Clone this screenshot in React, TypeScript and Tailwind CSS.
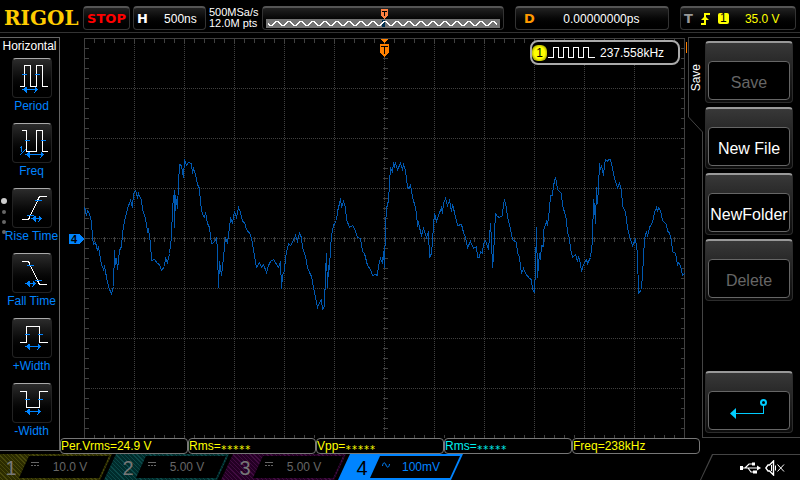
import type { ReactNode } from "react"

type IconProps = {
    lines: string,
    marks: string,
    arrow: number[],
    fraction?: boolean
}

type ChannelType = {
    id: number,
    scale: string,
    coupling: string,
    skin: string,
    active?: boolean
}

const TRACE = "84,207 86,215 87,210 89,213 91,222 92,236 93,244 95,242 97,250 98,246 101,264 103,269 104,266 107,282 109,289 111,293 113,286 114,250 115,264 116,258 117,269 119,250 121,246 122,233 124,221 127,208 130,200 132,207 133,193 135,190 137,197 138,193 141,200 142,209 145,218 147,231 148,229 150,243 151,260 154,259 157,263 159,264 161,270 164,266 165,258 167,262 169,253 171,237 172,207 174,190 174,227 175,195 177,208 178,183 179,164 181,165 183,177 184,159 186,165 188,162 191,163 192,173 193,168 195,174 197,184 199,188 200,202 202,214 204,217 205,212 207,223 209,227 211,243 214,242 216,237 217,250 218,287 219,261 221,275 223,257 225,237 227,243 229,227 230,218 232,222 234,211 236,217 238,207 240,212 242,221 244,222 246,229 250,234 252,243 254,255 256,267 259,262 261,267 263,264 266,272 268,265 270,261 273,259 278,267 280,261 281,288 282,275 284,270 285,257 288,243 290,245 292,242 295,235 297,241 299,233 301,237 302,247 305,256 307,267 309,272 311,276 313,287 315,297 317,307 319,302 321,299 322,309 324,306 325,273 326,253 327,287 328,266 329,268 330,248 331,235 333,225 336,220 337,211 339,203 340,198 341,207 343,201 345,207 346,219 349,227 352,225 354,228 357,237 360,238 362,251 364,253 367,265 370,269 372,275 375,274 377,275 378,265 380,258 382,263 383,251 384,267 385,226 386,208 388,200 389,183 390,167 392,172 393,162 394,166 395,163 397,169 400,163 402,169 403,164 405,170 407,187 409,188 410,184 412,197 415,207 416,213 417,226 418,221 419,227 421,235 423,228 426,237 428,231 429,257 431,253 432,240 433,225 434,213 436,221 438,215 441,207 442,213 443,203 445,198 447,205 449,200 451,211 452,204 454,212 457,225 461,224 463,232 465,237 467,247 470,241 473,248 476,246 477,257 479,257 480,251 482,253 483,243 485,240 488,249 490,223 491,240 492,267 493,257 494,233 495,213 497,216 499,217 502,215 503,203 504,200 506,207 507,217 509,224 512,239 516,242 517,252 519,257 521,273 523,268 525,273 529,278 531,279 532,289 534,292 535,267 536,227 537,277 539,253 540,259 541,245 543,246 543,230 546,221 547,225 549,208 550,195 552,195 553,185 555,177 556,182 557,189 561,193 562,205 565,215 566,220 567,232 569,238 570,248 572,257 575,254 577,261 578,256 580,263 581,271 583,264 586,259 587,263 590,257 592,240 593,199 594,205 595,223 596,187 597,203 598,187 599,163 600,169 601,165 603,175 604,165 605,159 607,161 608,159 610,159 612,168 614,178 617,187 619,183 621,190 622,205 625,212 627,227 629,236 632,245 635,239 637,253 638,293 641,289 642,273 643,258 644,238 646,231 647,236 649,227 652,222 654,212 656,207 657,211 658,207 660,210 662,220 666,224 667,231 669,232 671,240 672,251 675,253 677,264 678,262 680,265 682,275 684,273"

// white signal, blue level marks, arrow given as [from x, to x, y]
const measures: { name: string, icon: IconProps }[] = [
    { name: "Period", icon: { lines: "M7 28H12V7H18V28H24V7H30V28H35", marks: "M9 16H14M22 16H27", arrow: [11, 25, 31] } },
    { name: "Freq", icon: { lines: "M9 7H14V28H24V7H30V28H35", marks: "M12 17H17M28 17H33", arrow: [14, 31, 31], fraction: true } },
    { name: "Rise Time", icon: { lines: "M9 31H16L27 8H34", marks: "M14 27H21M22 12H29", arrow: [20, 29, 30] } },
    { name: "Fall Time", icon: { lines: "M9 8H16L27 31H34", marks: "M14 12H21M22 27H29", arrow: [14, 23, 30] } },
    { name: "+Width", icon: { lines: "M7 24H14V8H27V24H35", marks: "M12 16H17M25 16H30", arrow: [14, 28, 28] } },
    { name: "-Width", icon: { lines: "M7 8H14V24H27V8H35", marks: "M12 16H17M25 16H30", arrow: [14, 28, 28] } },
]

const results = [
    { label: "Per.Vrms=", value: "24.9 V", color: "text-[#ffff00]" },
    { label: "Rms=", value: "", color: "text-[#ffff00]" },
    { label: "Vpp=", value: "", color: "text-[#ffff00]" },
    { label: "Rms=", value: "", color: "text-[#00f0f0]" },
    { label: "Freq=", value: "238kHz", color: "text-[#ffff00]" },
]

const channels: ChannelType[] = [
    { id: 1, scale: "10.0 V", coupling: "dc", skin: "bg-[repeating-linear-gradient(45deg,#2c2c00_0_2px,#48480c_2px_3px)]" },
    { id: 2, scale: "5.00 V", coupling: "dc", skin: "bg-[repeating-linear-gradient(45deg,#002c2c_0_2px,#0c4848_2px_3px)]" },
    { id: 3, scale: "5.00 V", coupling: "dc", skin: "bg-[repeating-linear-gradient(45deg,#240024_0_2px,#400c40_2px_3px)]" },
    { id: 4, scale: "100mV", coupling: "ac", skin: "bg-[#0084ff]", active: true },
]

const range = (from: number, to: number, step: number) => {
    const out: number[] = []
    for (let i = from; i <= to; i += step) out.push(i)
    return out
}

const memoryWave = range(2, 231, 1).map(x => `${x},${15.5 - Math.round(2 * Math.sin((x - 8) * Math.PI / 6))}`).join(" ")

function MeasureIcon({ lines, marks, arrow, fraction }: IconProps) {
    const [from, to, y] = arrow
    return (
        <svg viewBox="1 1 38 38" className="size-full" fill="none" shapeRendering="crispEdges" aria-hidden="true">
            <g transform="translate(0.5 0.5)">
                <path d={lines} stroke="#fff" />
                <path d={marks} stroke="#0084ff" />
                <path d={`M${from} ${y}H${to}`} stroke="#0084ff" />
                <path d={`M${from - 1} ${y}L${from + 3} ${y - 3}V${y + 3}ZM${to + 1} ${y}L${to - 3} ${y - 3}V${y + 3}Z`} fill="#0084ff" />
                {fraction && <path d="M7 25L9 23V28M7 32L13 26" stroke="#0084ff" />}
            </g>
        </svg>
    )
}

function Readout({ className, children }: { className: string, children: ReactNode }) {
    return (
        <div className={`flex h-6 items-center rounded-sm border border-[#333] border-t-2 border-t-[#555] bg-linear-to-b from-[#222] to-black ${className}`}>
            {children}
        </div>
    )
}

function Tag({ className = "", children }: { className?: string, children: ReactNode }) {
    return <span className={`font-['DejaVu_Sans',sans-serif] text-[13px] font-bold ${className}`}>{children}</span>
}

function MemoryBar() {
    return (
        <Readout className="w-[242px] px-[3px]">
            <svg viewBox="0 0 234 21" className="h-[21px] w-full" fill="none" shapeRendering="crispEdges" aria-label="Memory">
                <rect x="0" y="11" width="234" height="9" fill="#747474" />
                <rect x="116" y="12" width="3" height="7" fill="#003050" />
                <polyline points={memoryWave} stroke="#fff" />
                <path d="M115 1H122V8L118.5 11L115 8Z" fill="#ff8040" />
                <path d="M116 3.5H121M118.5 3V8" stroke="#000" />
            </svg>
        </Readout>
    )
}

function Header() {
    return (
        <header className="flex h-[33px] items-center gap-[3px] border-b border-[#333] pt-1 pl-1">
            <h1 className="w-[76px] font-['DejaVu_Serif','Liberation_Serif',serif] text-xl leading-6 font-bold text-[#ffcc00]">RIGOL</h1>
            <Readout className="w-[47px] justify-center">
                <Tag className="text-[#ff0000]">STOP</Tag>
            </Readout>
            <Readout className="w-[73px] pl-[3px]">
                <Tag>H</Tag>
                <span className="flex-1 pl-2 text-center">500ns</span>
            </Readout>
            <p className="w-[50px] text-[11px] leading-[11px] whitespace-nowrap">500MSa/s<br />12.0M pts</p>
            <MemoryBar />
            <Readout className="ml-2 w-[154px] pl-2">
                <Tag className="text-[#ff9900]">D</Tag>
                <span className="flex-1 text-center">0.00000000ps</span>
            </Readout>
            <Readout className="ml-2 w-[116px] gap-2 pl-[3px] text-[#ffff00]">
                <Tag className="text-[#999]">T</Tag>
                <svg viewBox="0 0 9 12" className="h-3 w-[9px]" fill="none" stroke="currentColor" aria-hidden="true">
                    <path d="M0 11H4V1H9" strokeWidth="2" />
                    <path d="M0 7L4 3L8 7Z" fill="currentColor" stroke="none" />
                </svg>
                <span className="w-[11px] rounded-xs bg-[#ffff00] text-center leading-[11px] text-black">1</span>
                <span className="pl-2">35.0 V</span>
            </Readout>
        </header>
    )
}

function MeasurePanel() {
    return (
        <aside className="relative mt-1 mb-[3px] flex w-[60px] shrink-0 flex-col border-t border-r border-b border-[#666]">
            <h2 className="text-center leading-4">Horizontal</h2>
            <div className="flex flex-col gap-[9px] pt-1 pl-1">
                {measures.map(v => (
                    <button key={v.name} className="flex flex-col items-center text-[#0084ff]">
                        <span className="size-10 rounded-sm border border-[#222] border-t-[#aaa] bg-linear-to-b from-[#2c2c2c] to-black">
                            <MeasureIcon {...v.icon} />
                        </span>
                        <span className="leading-4 whitespace-nowrap">{v.name}</span>
                    </button>
                ))}
            </div>
            <div className="absolute top-40 left-px flex flex-col items-center gap-[6px]">
                <span className="size-[6px] rounded-full bg-[#ccc]" />
                <span className="size-1 rounded-full bg-[#666]" />
                <span className="size-1 rounded-full bg-[#666]" />
                <span className="size-1 rounded-full bg-[#666]" />
            </div>
        </aside>
    )
}

function Scope() {
    return (
        <section className="relative min-w-0 flex-1">
            <svg viewBox="60 33 627 405" preserveAspectRatio="none" className="size-full" fill="none" shapeRendering="crispEdges" aria-label="Channel 4 waveform">
                <g transform="translate(0.5 0.5)">
                    <g stroke="#404040" strokeDasharray="1 1">
                        {range(134, 634, 50).map(x => <path key={x} d={`M${x} 38V438`} />)}
                        {range(88, 388, 50).map(y => <path key={y} d={`M84 ${y}H684`} />)}
                    </g>
                    <g stroke="#404040">
                        <path d="M84 438V38H684V438" />
                        {range(94, 674, 10).map(x => <path key={x} d={`M${x} 38V42M${x} 236V241M${x} 434V438`} />)}
                        {range(48, 428, 10).map(y => <path key={y} d={`M84 ${y}H88M382 ${y}H387M680 ${y}H684`} />)}
                    </g>
                    <polyline points={TRACE} stroke="#0058b0" />
                </g>
                <path d="M380 39H389L384.5 43Z" fill="#ff8000" />
                <path d="M380 44H389V53L384.5 57L380 53Z" fill="#ff8000" />
                <path d="M381 46.5H388M384.5 46V54" stroke="#000" />
                <path d="M69 234H79L84 239L79 244H69Z" fill="#0084ff" />
                <text x="71" y="243" fill="#000" fontSize="11" fontWeight="bold">4</text>
                <path d="M687 42V53" stroke="#ff8000" strokeWidth="2" />
            </svg>
            <div className="absolute top-[7px] right-[7px] flex h-[25px] w-[150px] items-center rounded-lg border-2 border-[#aaa] bg-black">
                <span className="w-[15px] rounded-md bg-[radial-gradient(#ffff00_50%,#666600)] text-center leading-4 text-black">1</span>
                <svg viewBox="0 0 47 11" className="ml-px h-[11px] w-[47px]" fill="none" stroke="#fff" shapeRendering="crispEdges" aria-hidden="true">
                    <path d="M0 10.5H5.5V.5H10.5V10.5H15.5V.5H20.5V10.5H25.5V.5H30.5V10.5H35.5V.5H40.5V10.5H47" />
                </svg>
                <span className="pl-[5px]">237.558kHz</span>
            </div>
        </section>
    )
}

function SoftKey({ label, disabled, className = "", children }: { label: string, disabled?: boolean, className?: string, children?: ReactNode }) {
    return (
        <button aria-label={label} disabled={disabled} className={`h-[62px] rounded-sm border border-[#2c2c2c] border-t-2 border-t-[#999] bg-linear-to-b from-[#383838] to-[#0c0c0c] px-[2px] pt-[18px] pb-[2px] text-base text-white disabled:text-[#666] ${className}`}>
            <span className="flex h-full items-center justify-center overflow-hidden rounded-sm border border-[#666] bg-black pt-1">
                {children || label}
            </span>
        </button>
    )
}

function Menu() {
    return (
        <aside className="flex w-[113px] shrink-0 pt-1">
            <div className="flex w-4 shrink-0 flex-col pl-px">
                <h2 className="flex h-20 items-center justify-center border-t border-l border-[#444]">
                    <span className="rotate-180 leading-4 [writing-mode:vertical-rl]">Save</span>
                </h2>
                <svg viewBox="0 0 15 15" className="size-[15px]" stroke="#444" aria-hidden="true"><path d="M.5 0L14.5 15" /></svg>
                <div className="flex-1 border-r border-[#444]" />
            </div>
            <div className="flex min-w-0 flex-1 flex-col gap-1 border-t border-b border-[#444] pt-[3px] pr-[7px] pb-1 pl-[2px]">
                <SoftKey label="Save" disabled />
                <SoftKey label="New File" />
                <SoftKey label="NewFolder" />
                <SoftKey label="Delete" disabled />
                <SoftKey label="Back" className="mt-auto">
                    <svg viewBox="0 0 38 20" className="mb-2 h-5 w-[38px]" fill="none" stroke="#00ccff" aria-hidden="true">
                        <circle cx="33.5" cy="3.5" r="2.5" strokeWidth="2" />
                        <path d="M33.5 6V14.5H5" shapeRendering="crispEdges" />
                        <path d="M0 14.5L6 9V20Z" fill="#00ccff" stroke="none" />
                    </svg>
                </SoftKey>
            </div>
        </aside>
    )
}

function Channel({ id, scale, coupling, skin, active }: ChannelType) {
    return (
        <button className={`-mr-2 flex h-[26px] w-[125px] pt-[2px] pr-[3px] pb-[2px] [clip-path:polygon(12px_0,100%_0,calc(100%-12px)_100%,0_100%)] ${skin}`}>
            <span className={`w-8 pl-4 text-xl leading-6 ${active ? "text-black" : "text-[#777]"}`}>{id}</span>
            <span className={`flex h-full flex-1 items-center bg-black pl-3 [clip-path:polygon(10px_0,100%_0,calc(100%-10px)_100%,0_100%)] ${active ? "text-[#0084ff]" : "text-[#666]"}`}>
                <svg viewBox="0 0 8 8" className="mb-1 size-2" fill="none" stroke="currentColor" aria-hidden="true">
                    {coupling === "dc"
                        ? <path d="M0 1.5H8M0 4.5H2M3 4.5H5M6 4.5H8" />
                        : <path d="M.5 5C1 1 3 1 4 4S7 7 7.5 3" />}
                </svg>
                <span className="flex-1 pr-2 text-center leading-5">{scale}</span>
            </span>
        </button>
    )
}

function Status() {
    return (
        <div className="flex h-[26px] w-[100px] bg-[#444] pt-px [clip-path:polygon(12px_0,100%_0,100%_100%,0_100%)]">
            <div className="flex flex-1 items-center gap-1 bg-black pr-[14px] pl-10 [clip-path:polygon(13px_0,100%_0,100%_100%,1px_100%)]">
                <svg viewBox="0 0 21 12" className="h-3 w-[21px]" fill="none" stroke="#fff" aria-label="USB">
                    <path d="M2 6H18M5 6L9 2H12M8 6L11 10H14" strokeWidth="1.2" />
                    <path d="M0 4H3V8H0Z" fill="#fff" stroke="none" />
                    <path d="M17 3.5L21 6L17 8.5Z" fill="#fff" stroke="none" />
                    <path d="M12 .5H15V3.5H12ZM13 8.5H17V11.5H13Z" fill="#fff" stroke="none" />
                </svg>
                <svg viewBox="0 0 20 16" className="h-4 w-5" fill="none" stroke="#fff" aria-label="Muted">
                    <path d="M8.5 1V15L4.5 11H3L.8 8L3 5H4.5Z" strokeWidth="1.4" />
                    <path d="M6.5 5V11M10.5 5.5V10.5M12.5 4.5L19 11.5M19 4.5L12.5 11.5" />
                </svg>
            </div>
        </div>
    )
}

export default function App() {
    return (
        <div className="flex min-h-screen flex-col overflow-hidden bg-black font-['Liberation_Sans',Arial,sans-serif] text-xs text-white">
            <Header />
            <main className="flex flex-1">
                <MeasurePanel />
                <div className="flex min-w-0 flex-1 flex-col">
                    <div className="flex flex-1">
                        <Scope />
                        <Menu />
                    </div>
                    <div className="mr-[100px] flex h-4">
                        {results.map((v, i) => (
                            <p key={i} className={`flex-1 rounded-sm border border-[#777] leading-[14px] whitespace-nowrap ${v.color}`}>
                                {v.label}{v.value || <span className="align-sub font-['DejaVu_Sans_Mono',monospace] text-[10px] leading-none">*****</span>}
                            </p>
                        ))}
                    </div>
                </div>
            </main>
            <footer className="flex justify-between">
                <nav className="-ml-[13px] flex">
                    {channels.map(v => <Channel key={v.id} {...v} />)}
                </nav>
                <Status />
            </footer>
        </div>
    )
}
